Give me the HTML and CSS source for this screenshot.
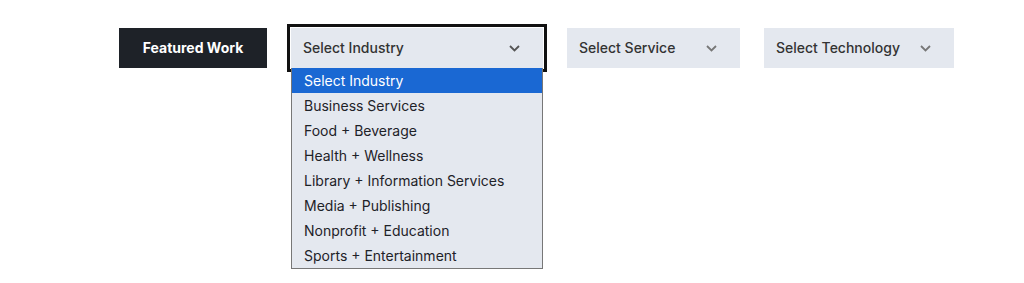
FILE: index.html
```html
<!DOCTYPE html>
<html>
<head>
<meta charset="utf-8">
<link rel="stylesheet" href="styles.css">
</head>
<body>
<div class="bar">
  <button class="btn">Featured Work</button>
  <div class="field">
    <div class="select select--industry is-open">
      <span class="select__label">Select Industry</span>
      <svg class="chev" width="11" height="7" viewBox="0 0 11 7"><path d="M1 1l4.5 4.5L10 1" fill="none" stroke="currentColor" stroke-width="1.8"/></svg>
    </div>
    <ul class="menu">
      <li class="menu__item is-active">Select Industry</li>
      <li class="menu__item">Business Services</li>
      <li class="menu__item">Food + Beverage</li>
      <li class="menu__item">Health + Wellness</li>
      <li class="menu__item">Library + Information Services</li>
      <li class="menu__item">Media + Publishing</li>
      <li class="menu__item">Nonprofit + Education</li>
      <li class="menu__item">Sports + Entertainment</li>
    </ul>
  </div>
  <div class="select select--service">
    <span class="select__label">Select Service</span>
    <svg class="chev chev--light" width="11" height="7" viewBox="0 0 11 7"><path d="M1 1l4.5 4.5L10 1" fill="none" stroke="currentColor" stroke-width="1.8"/></svg>
  </div>
  <div class="select select--tech">
    <span class="select__label">Select Technology</span>
    <svg class="chev chev--light" width="11" height="7" viewBox="0 0 11 7"><path d="M1 1l4.5 4.5L10 1" fill="none" stroke="currentColor" stroke-width="1.8"/></svg>
  </div>
</div>
</body>
</html>
```
FILE: styles.css
```css
* { box-sizing: border-box; }
html, body { margin: 0; padding: 0; background: #fff; }
body { font-family: Inter, "Noto Sans", sans-serif; color: #2b2b2b; }
.bar {
  display: flex;
  gap: 24px;
  padding: 28px 0 0 119px;
  align-items: flex-start;
}
.btn {
  width: 148px;
  height: 40px;
  background: #1e2228;
  color: #fff;
  border: 0;
  font: 700 14px Inter, sans-serif;
  letter-spacing: 0;
  padding: 0 0 2px;
}
.field {
  width: 252px;
  display: flex;
  flex-direction: column;
}
.select {
  height: 40px;
  background: #e4e8ef;
  display: flex;
  align-items: center;
  justify-content: space-between;
  padding: 0 23px 0 12px;
  font-size: 14px;
  font-weight: 500;
  color: #333;
}
.select__label { padding-bottom: 2px; }
.select--industry { width: 252px; }
.select--service { width: 173px; }
.select--tech { width: 190px; }
.is-open { outline: 3px solid #111; outline-offset: 1px; }
.chev { color: #555; display: block; }
.chev--light { color: #777; }
.menu {
  width: 252px;
  margin: 0;
  padding: 0;
  list-style: none;
  background: #e4e8ef;
  border: 1px solid #777;
  border-top: 0;
}
.menu__item {
  height: 25px;
  line-height: 25px;
  padding-left: 12px;
  font-size: 14px;
  font-weight: 400;
  color: #1e2228;
  white-space: nowrap;
}
.menu__item.is-active { background: #1a68d3; color: #fff; }
```
